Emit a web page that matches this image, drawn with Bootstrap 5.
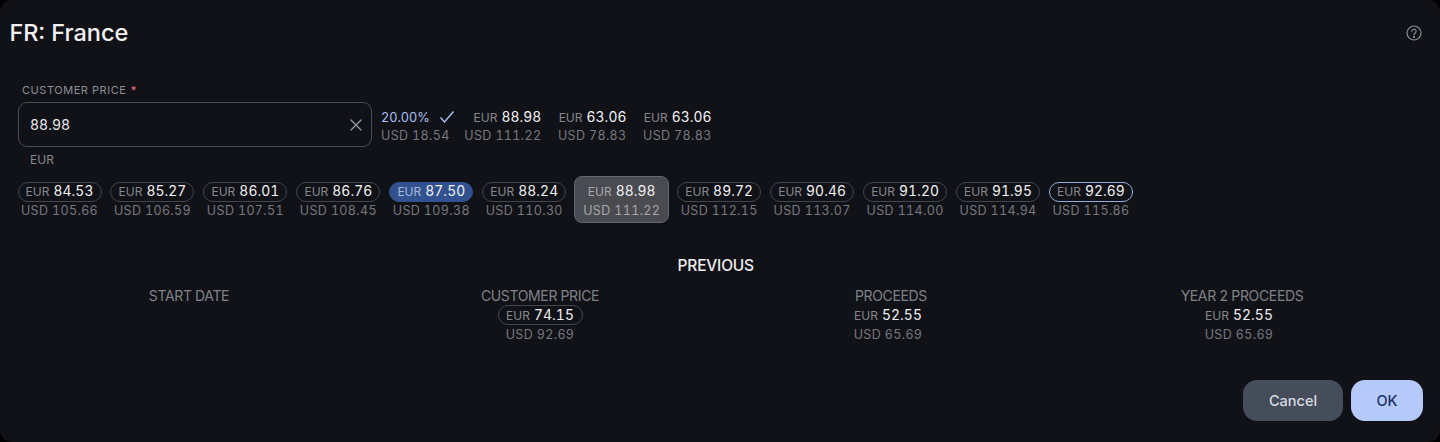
<!DOCTYPE html>
<html lang="en"><head><meta charset="utf-8"><title>FR: France</title>
<link rel="stylesheet" href="https://cdn.jsdelivr.net/npm/bootstrap@5.3.0/dist/css/bootstrap.min.css">
<style>
html,body{height:442px;overflow:hidden;background:#000}
body{font-family:Inter,"Liberation Sans",sans-serif;color:#fff;font-variant-numeric:tabular-nums}
.sheet{background:#111217;height:442px;border-radius:12px;position:relative;padding:0 17px 0 17.5px;overflow:hidden}
.ttl{font-size:23.5px;font-weight:500;line-height:28px;color:#f1f1f3;margin:19px 0 0 -8px}
.help{position:absolute;left:1406px;top:25px;width:16px;height:16px}
.lbl{font-size:11px;letter-spacing:.55px;line-height:14px;color:#8c8e94;margin:36px 0 5px 4.500px;text-transform:uppercase}
.lbl i{font-style:normal;color:#e8707f}
.fieldbox{width:354.500px;height:45px;border:1px solid #4a4c52;border-radius:9px;padding:0 8px 0 11.500px;font-size:14px;color:#e9e9ec}
.fieldbox svg{width:14px;height:14px}
.help-txt{font-size:12px;color:#85878d;line-height:14px;margin:6px 0 0 12.500px}
.cell{text-align:center;width:84px;flex:none;font-size:12.5px}
.pill{display:block;height:20px;line-height:17px;border:1px solid #44464d;border-radius:10px;white-space:nowrap}
.cur{color:#85878d;font-size:12px;margin-right:4px}
.amt{color:#f2f2f4;font-size:13.8px;font-weight:400;letter-spacing:.1px}
.usd{display:block;color:#76787e;font-size:12.5px;line-height:14px;margin-top:2px;letter-spacing:.35px;white-space:nowrap}
.tiers{gap:8.960px;margin-top:9px;height:47px;align-items:flex-start}
.tiers .cell{margin-top:6px}
.tiers .cell.hot .pill{background:#31528f;border-color:#31528f}
.tiers .cell.hot .cur{color:#a8b8d8}
.tiers .cell.edge .pill{border-color:#94aee0}
.tiers .cell.pick{background:#4a4b50;border:1px solid #66686d;border-radius:8px;margin:0 -1px;width:95px;height:47px;padding-top:5px}
.pick .pill{border-color:transparent}
.pick .cur,.pick .usd{color:#a5a6aa}
.stats{margin:7px 0 0 9px;gap:16.500px;align-self:flex-start}
.stats .cell{width:auto;text-align:right}
.stats .cell.rate{text-align:left;margin-right:-7px}
.stats .pill{border:0;height:18px;line-height:16px}
.stats .usd{margin-top:0;line-height:17px}
.pct{color:#a9c0f5;font-size:12.7px;margin-right:0}
.stats svg{width:16px;height:16px;margin-left:9px;vertical-align:-3px}
.prev{text-align:center;font-size:15.5px;font-weight:500;letter-spacing:-.2px;line-height:18px;margin:34px 0 0 -9px;color:#eeeef0;text-transform:uppercase}
.cols{display:grid;grid-template-columns:repeat(4,351px);margin:12px 0 0 -4px}
.colbox{display:flex;flex-direction:column;align-items:center;font-size:12.5px}
.hd{font-size:14px;color:#7f8187;line-height:17px;letter-spacing:-.35px;text-transform:uppercase;height:18px}
.colbox .pill{width:85px;text-align:center;line-height:18px}
.colbox .usd{margin-top:3px}
.colbox .plain{border-color:transparent}
.colbox .plain,.colbox .plain + .usd{margin-left:-6px}
.acts{position:absolute;right:17px;top:380px;gap:8px}
.acts .btn{height:41px;border-radius:14px;border:0;font-size:14.5px;font-weight:500;padding:0}
.b-cancel{width:100px;background:#454c5a;color:#d9dce3}
.b-ok{width:72px;background:#b5c9fb;color:#1c3166}
</style></head><body>
<div class="sheet">
<h1 class="ttl">FR: France</h1>
<svg class="help" viewBox="0 0 16 16" fill="none" stroke="#8c8e94" stroke-width="1.2"><circle cx="8" cy="8" r="7"/><path d="M5.9 6.2a2.1 2.1 0 1 1 3.3 1.7c-.8.5-1.2.9-1.2 1.8" stroke-linecap="round"/><circle cx="8" cy="11.9" r=".5" fill="#8c8e94"/></svg>
<div class="lbl">Customer Price <i>*</i></div>
<div class="d-flex">
<div>
<div class="fieldbox d-flex align-items-center justify-content-between"><span>88.98</span><svg viewBox="0 0 14 14" fill="none" stroke="#9a9ca2" stroke-width="1.3" stroke-linecap="round"><path d="M2 2l10 10M12 2L2 12"/></svg></div>
<div class="help-txt">EUR</div>
</div>
<div class="stats d-flex">
<div class="cell rate"><span class="pill"><span class="cur pct">20.00%</span><svg viewBox="0 0 16 16" fill="none" stroke="#a9c0f5" stroke-width="1.4"><path d="M1.5 8.5l4 4.5L14.500 2.500"/></svg></span><span class="usd">USD 18.54</span></div>
<div class="cell"><span class="pill"><span class="cur">EUR</span><span class="amt">88.98</span></span><span class="usd">USD 111.22</span></div>
<div class="cell"><span class="pill"><span class="cur">EUR</span><span class="amt">63.06</span></span><span class="usd">USD 78.83</span></div>
<div class="cell"><span class="pill"><span class="cur">EUR</span><span class="amt">63.06</span></span><span class="usd">USD 78.83</span></div>
</div>
</div>
<div class="d-flex tiers">
<div class="cell"><span class="pill"><span class="cur">EUR</span><span class="amt">84.53</span></span><span class="usd">USD 105.66</span></div>
<div class="cell"><span class="pill"><span class="cur">EUR</span><span class="amt">85.27</span></span><span class="usd">USD 106.59</span></div>
<div class="cell"><span class="pill"><span class="cur">EUR</span><span class="amt">86.01</span></span><span class="usd">USD 107.51</span></div>
<div class="cell"><span class="pill"><span class="cur">EUR</span><span class="amt">86.76</span></span><span class="usd">USD 108.45</span></div>
<div class="cell hot"><span class="pill"><span class="cur">EUR</span><span class="amt">87.50</span></span><span class="usd">USD 109.38</span></div>
<div class="cell"><span class="pill"><span class="cur">EUR</span><span class="amt">88.24</span></span><span class="usd">USD 110.30</span></div>
<div class="cell pick"><span class="pill"><span class="cur">EUR</span><span class="amt">88.98</span></span><span class="usd">USD 111.22</span></div>
<div class="cell"><span class="pill"><span class="cur">EUR</span><span class="amt">89.72</span></span><span class="usd">USD 112.15</span></div>
<div class="cell"><span class="pill"><span class="cur">EUR</span><span class="amt">90.46</span></span><span class="usd">USD 113.07</span></div>
<div class="cell"><span class="pill"><span class="cur">EUR</span><span class="amt">91.20</span></span><span class="usd">USD 114.00</span></div>
<div class="cell"><span class="pill"><span class="cur">EUR</span><span class="amt">91.95</span></span><span class="usd">USD 114.94</span></div>
<div class="cell edge"><span class="pill"><span class="cur">EUR</span><span class="amt">92.69</span></span><span class="usd">USD 115.86</span></div>
</div>
<div class="prev">Previous</div>
<div class="cols">
<div class="colbox"><div class="hd">Start Date</div></div>
<div class="colbox"><div class="hd">Customer Price</div><span class="pill"><span class="cur">EUR</span><span class="amt">74.15</span></span><span class="usd">USD 92.69</span></div>
<div class="colbox"><div class="hd">Proceeds</div><span class="pill plain"><span class="cur">EUR</span><span class="amt">52.55</span></span><span class="usd">USD 65.69</span></div>
<div class="colbox"><div class="hd">Year 2 Proceeds</div><span class="pill plain"><span class="cur">EUR</span><span class="amt">52.55</span></span><span class="usd">USD 65.69</span></div>
</div>
<div class="acts d-flex"><button type="button" class="btn b-cancel">Cancel</button><button type="button" class="btn b-ok">OK</button></div>
</div>
<script src="https://cdn.jsdelivr.net/npm/bootstrap@5.3.0/dist/js/bootstrap.bundle.min.js"></script>
</body></html>
